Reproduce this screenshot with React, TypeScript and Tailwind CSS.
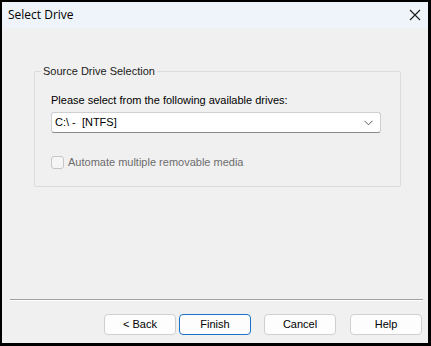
import React from 'react';

const uiFont = { fontFamily: '"Liberation Sans", Arial, sans-serif' };

function DialogButton({ label, primary }: { label: string; primary?: boolean }) {
  return (
    <button
      className={
        primary
          ? 'w-[72px] h-[21px] rounded-[4px] border border-[#1a73c7] bg-[#fdfdfd] text-[11px] text-black leading-none'
          : 'w-[72px] h-[21px] rounded-[4px] border border-[#d0d0d0] bg-[#fdfdfd] text-[11px] text-black leading-none'
      }
    >
      {label}
    </button>
  );
}

export default function App() {
  return (
    <div
      className="w-[431px] h-[346px] flex flex-col bg-[#f0f0f0] border-black border-t-2 border-l-2 border-r-[3px] border-b-[3px] overflow-hidden"
      style={uiFont}
    >
      {/* Title bar */}
      <div className="h-[26px] shrink-0 flex items-center justify-between bg-[#eef4f9] pl-[6px] pr-[6px]">
        <span className="text-[12px] text-black" style={{ fontFamily: '"Open Sans", "Liberation Sans", sans-serif' }}>
          Select Drive
        </span>
        <svg width="12" height="12" viewBox="0 0 12 12" className="mr-[1px]">
          <path d="M1 1 L11 11 M11 1 L1 11" stroke="#1a1a1a" strokeWidth="1.1" fill="none" />
        </svg>
      </div>

      {/* Body */}
      <div className="flex-1 flex flex-col">
        <div className="ml-[32px] mt-[43px] w-[367px] h-[116px] relative border border-[#dcdcdc] rounded-[2px]">
          <span className="absolute left-[6px] -top-[8px] px-[2px] bg-[#f0f0f0] text-[11px] leading-[14px] text-[#1a1a1a]">
            Source Drive Selection
          </span>
          <div className="pl-[16px] pt-[21px] flex flex-col">
            <span className="text-[11px] leading-[14px] text-black">
              Please select from the following available drives:
            </span>
            <div className="mt-[5px] w-[330px] h-[21px] flex items-center justify-between bg-white border border-[#cfcfcf] border-b-[#8a8a8a] rounded-[3px] pl-[3px] pr-[7px]">
              <span className="text-[11px] text-black whitespace-pre">C:\ -  [NTFS]</span>
              <svg width="9" height="6" viewBox="0 0 9 6">
                <path d="M0.5 0.8 L4.5 4.8 L8.5 0.8" stroke="#5a5a5a" strokeWidth="1" fill="none" />
              </svg>
            </div>
            <div className="mt-[22px] flex items-center gap-[4px]">
              <span className="w-[13px] h-[13px] rounded-[3px] border border-[#c6c6c6] bg-[#f5f5f5]" />
              <span className="text-[11px] leading-[14px] text-[#6d6d6d]">Automate multiple removable media</span>
            </div>
          </div>
        </div>

        <div className="flex-1" />

        {/* Separator */}
        <div className="ml-[8px] mr-[5px] h-[2px] border-t border-[#a0a0a0] border-b border-b-[#ffffff]" />

        {/* Buttons */}
        <div className="h-[42px] flex items-start justify-end pt-[13px] pr-[6px]">
          <div className="flex gap-[3px]">
            <DialogButton label="< Back" />
            <DialogButton label="Finish" primary />
          </div>
          <div className="ml-[13px] flex gap-[14px]">
            <DialogButton label="Cancel" />
            <DialogButton label="Help" />
          </div>
        </div>
      </div>
    </div>
  );
}
